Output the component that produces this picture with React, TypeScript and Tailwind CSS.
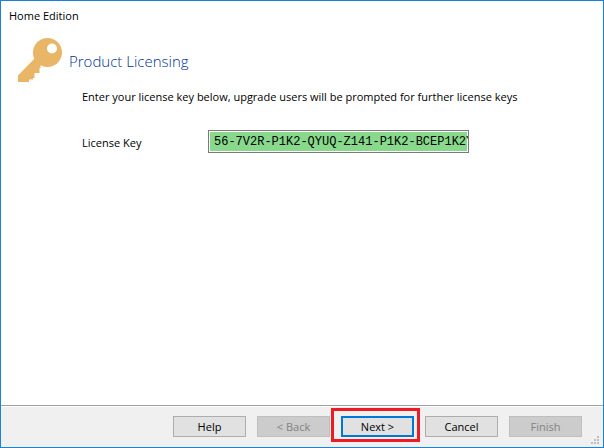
import { useState } from 'react';
import clsx from 'clsx';

type WizardButtonProps = {
  label: string;
  disabled?: boolean;
  primary?: boolean;
};

function WizardButton({ label, disabled, primary }: WizardButtonProps) {
  return (
    <button
      type="button"
      disabled={disabled}
      className={clsx(
        'flex h-[21px] w-[73px] items-center justify-center',
        disabled && 'border border-[#bfbfbf] bg-[#cccccc] text-[#838383]',
        primary && 'border-2 border-[#0078d7] bg-[#e1e1e1]',
        !disabled && !primary && 'border border-[#adadad] bg-[#e1e1e1]'
      )}
    >
      {label}
    </button>
  );
}

function KeyIcon() {
  return (
    <svg width="45" height="45" viewBox="0 0 45 45" fill="#e9b566" aria-hidden="true">
      <path
        fillRule="evenodd"
        d="M29.5 0a14.5 14.5 0 1 1-7 27.2V30h-1v5h-5v5h-1.5v1.500h-4V44H0v-6.500L16.300 20.700A14.500 14.500 0 0 1 29.500 0zm4.500 5.500a5 5 0 1 0 0 10a5 5 0 0 0 0-10z"
      />
    </svg>
  );
}

function ResizeGrip() {
  return (
    <svg
      width="8"
      height="8"
      viewBox="0 0 8 8"
      fill="#bfbfbf"
      aria-hidden="true"
      className="absolute right-1 bottom-[3px]"
    >
      <path d="M6 0h2v2H6zM3 3h2v2H3zM6 3h2v2H6zM0 6h2v2H0zM3 6h2v2H3zM6 6h2v2H6z" />
    </svg>
  );
}

export default function App() {
  const [licenseKey, setLicenseKey] = useState('56-7V2R-P1K2-QYUQ-Z141-P1K2-BCEP1K2Y');

  return (
    <div className="flex min-h-screen flex-col border border-[#1883d7] bg-white font-['Open_Sans','Noto_Sans',sans-serif] text-[11px] leading-4 text-black">
      <header className="px-2 pt-[7px]">Home Edition</header>

      <main className="flex-1 pl-[17px]">
        <div className="flex items-center gap-[6px] pt-[14px]">
          <KeyIcon />
          <h1 className="text-[15px] leading-5 font-light text-[#003399]">Product Licensing</h1>
        </div>

        <div className="pt-[6px] pl-16">
          <p>Enter your license key below, upgrade users will be prompted for further license keys</p>
          <div className="flex items-center pt-[25px]">
            <label htmlFor="license-key" className="w-[126px] pt-[2px]">
              License Key
            </label>
            <input
              id="license-key"
              type="text"
              value={licenseKey}
              onChange={(e) => setLicenseKey(e.target.value)}
              className="h-[23px] w-[261px] border border-[#7a7a7a] bg-[#88d98c] pl-[5px] font-['Liberation_Mono',monospace] text-[12px] ring-1 ring-white outline-none ring-inset"
            />
          </div>
        </div>
      </main>

      <footer className="relative border-t border-[#a0a0a0] bg-[#f0f0f0]">
        <div className="flex justify-end gap-[11px] border-t border-white pt-[9px] pr-[21px] pb-[10px]">
          <WizardButton label="Help" />
          <WizardButton label="< Back" disabled />
          <div className="relative">
            <WizardButton label="Next >" primary />
            <div className="pointer-events-none absolute -top-2 -right-[6px] -bottom-[5px] -left-[10px] border-3 border-[#ed1c24]" />
          </div>
          <WizardButton label="Cancel" />
          <WizardButton label="Finish" disabled />
        </div>
        <ResizeGrip />
      </footer>
    </div>
  );
}
